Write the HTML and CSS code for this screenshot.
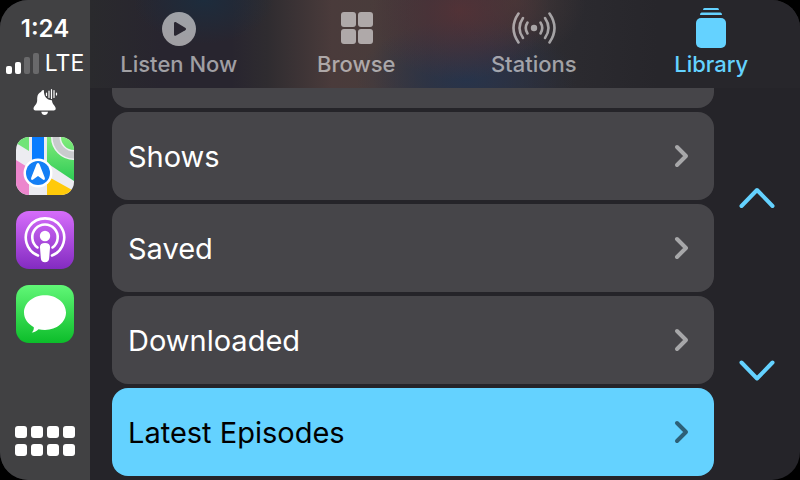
FILE: index.html
```html
<!DOCTYPE html>
<html lang="en">

<head>
    <meta charset="UTF-8">
    <meta name="viewport" content="width=device-width, initial-scale=1.0">
    <title>Podcasts</title>
    <link rel="stylesheet" href="styles.css">
</head>

<body>
    <div class="screen">
        <!-- dock -->
        <aside class="dock">
            <div class="status">
                <time class="clock">1:24</time>
                <div class="signal">
                    <svg width="34" height="22" viewBox="0 0 34 22" aria-hidden="true">
                        <g fill="#fff">
                            <rect x="0" y="14" width="6" height="8" rx="2" />
                            <rect x="9" y="10" width="6" height="12" rx="2" />
                        </g>
                        <g fill="#69696b">
                            <rect x="18" y="5" width="6" height="17" rx="2" />
                            <rect x="27" y="1" width="6" height="21" rx="2" />
                        </g>
                    </svg>
                    <span>LTE</span>
                </div>
                <svg class="bell" width="28" height="32" viewBox="0 0 28 32" aria-hidden="true">
                    <path fill="#fff" d="M12.500 5C13.400 5 12.600 6.600 13.300 9.300C14.300 13.300 17.600 15.500 21 15.200C21 19.500 24.700 20.600 24.700 23.500C24.700 25 23.800 25.400 22.800 25.400H4.500C3.300 25.400 2.500 24.900 2.500 23.600C2.500 20.800 6.200 20 6.200 15C6.200 10.500 7 8.300 10 7C10.600 5.700 11.200 5 12.500 5Z" />
                    <path fill="#fff" d="M10.300 26.800H17C16.600 29 15.400 30 13.600 30S10.700 29 10.300 26.800Z" />
                    <path stroke="#fff" stroke-width="1.200" stroke-linecap="round" d="M15.500 8V10.500M18 6V12.500M20.500 4.500V13.500M23 5.500V12.500M25.500 8V10" />
                </svg>
            </div>

            <nav class="apps">
                <a href="#" class="app" aria-label="Maps">
                    <svg viewBox="0 0 58 58">
                        <defs>
                            <linearGradient id="park" x1="0" y1="0" x2="0" y2="1">
                                <stop offset="0" stop-color="#82ec7c" />
                                <stop offset="1" stop-color="#2dcb54" />
                            </linearGradient>
                        </defs>
                        <rect width="58" height="58" fill="#ececf1" />
                        <path fill="#71e477" d="M0 0H13V14L0 6Z" />
                        <path fill="#ec86cd" d="M0 23L13 31V58H0Z" />
                        <path fill="url(#park)" d="M31 0H58V44L31 26Z" />
                        <path fill="#ffca0a" d="M31 39L58 54V58H31Z" />
                        <circle cx="58" cy="0" r="18" fill="none" stroke="#f0f0f3" stroke-width="10" />
                        <circle cx="58" cy="0" r="18" fill="none" stroke="#c9cbcd" stroke-width="7" />
                        <path fill="#087cff" d="M16 0H28V25H16Z" />
                        <circle cx="22" cy="36" r="14.500" fill="#fff" />
                        <circle cx="22" cy="36" r="12" fill="#147ff5" />
                        <path fill="#fff" d="M22 26C23 26 23.500 27 24 28.500L28.700 40.500C29.500 43 28 43.500 26.500 42.300L22 39L17.500 42.300C16 43.500 14.500 43 15.300 40.500L20 28.500C20.500 27 21 26 22 26Z" />
                    </svg>
                </a>
                <a href="#" class="app" aria-label="Podcasts">
                    <svg viewBox="0 0 58 58">
                        <defs>
                            <linearGradient id="purple" x1="0" y1="0" x2="0" y2="1">
                                <stop offset="0" stop-color="#d66dfb" />
                                <stop offset="1" stop-color="#832bc1" />
                            </linearGradient>
                        </defs>
                        <rect width="58" height="58" fill="url(#purple)" />
                        <g fill="none" stroke="#fff" stroke-width="2.600" stroke-linecap="round">
                            <path d="M22 44.500A19.200 19.200 0 1 1 36 44.500" />
                            <path d="M21.500 36.500A12.700 12.700 0 1 1 36.500 36.500" />
                        </g>
                        <circle cx="29" cy="25" r="5.200" fill="#fff" />
                        <path fill="#fff" d="M29 32C32.500 32 34.200 33.500 34 36.500L33.200 47C33 50 31.500 51.200 29 51.200S25 50 24.800 47L24 36.500C23.800 33.500 25.500 32 29 32Z" />
                    </svg>
                </a>
                <a href="#" class="app" aria-label="Messages">
                    <svg viewBox="0 0 58 58">
                        <defs>
                            <linearGradient id="green" x1="0" y1="0" x2="0" y2="1">
                                <stop offset="0" stop-color="#61f777" />
                                <stop offset="1" stop-color="#0cbd2a" />
                            </linearGradient>
                        </defs>
                        <rect width="58" height="58" fill="url(#green)" />
                        <path fill="#fff" d="M29 10.300C40.700 10.300 50 18 50 27.600S40.700 45 29 45C26.700 45 24.500 44.700 22.500 44.200C20.700 46 18.300 47.300 15.700 47.600C17.300 46.200 18 44.300 17.800 42.200C11.900 39.100 8 33.700 8 27.600C8 18 17.300 10.300 29 10.300Z" />
                    </svg>
                </a>
            </nav>

            <button type="button" class="dashboard" aria-label="Home">
                <i></i><i></i><i></i><i></i>
                <i></i><i></i><i></i><i></i>
            </button>
        </aside>

        <main class="main">
            <!-- tabs -->
            <nav class="tabs">
                <a href="#" class="tab">
                    <svg width="48" height="44" viewBox="0 0 48 44" aria-hidden="true">
                        <circle cx="24" cy="25" r="17" fill="currentColor" />
                        <path fill="#292631" d="M19 19.500C19 18.200 20 17.700 21.100 18.300L30.200 23.700C31.300 24.400 31.300 25.500 30.200 26.200L21.100 31.600C20 32.200 19 31.700 19 30.400Z" />
                    </svg>
                    <span>Listen Now</span>
                </a>
                <a href="#" class="tab">
                    <svg width="48" height="44" viewBox="0 0 48 44" fill="currentColor" aria-hidden="true">
                        <rect x="9" y="8" width="15" height="15" rx="3" />
                        <rect x="26" y="8" width="15" height="15" rx="3" />
                        <rect x="9" y="25" width="15" height="15" rx="3" />
                        <rect x="26" y="25" width="15" height="15" rx="3" />
                    </svg>
                    <span>Browse</span>
                </a>
                <a href="#" class="tab">
                    <svg width="48" height="44" viewBox="0 0 48 44" fill="none" stroke="currentColor" stroke-width="2.600" stroke-linecap="round" aria-hidden="true">
                        <circle cx="24" cy="24" r="3.200" fill="currentColor" stroke="none" />
                        <path d="M17.500 18.500Q14 24 17.500 29.500M30.500 18.500Q34 24 30.500 29.500" />
                        <path d="M13 14Q6 24 13 34M35 14Q42 24 35 34" />
                        <path d="M8.500 9.500Q-1.500 24 8.500 38.500M39.500 9.500Q49.500 24 39.500 38.500" />
                    </svg>
                    <span>Stations</span>
                </a>
                <a href="#" class="tab active">
                    <svg width="48" height="44" viewBox="0 0 48 44" fill="currentColor" aria-hidden="true">
                        <path d="M17.500 4H30.500Q32 4 32 6H16Q16 4 17.500 4Z" />
                        <path d="M14.500 8.500H33.500Q35 8.500 35 11H13Q13 8.500 14.500 8.500Z" />
                        <rect x="9" y="14" width="30" height="30" rx="5" />
                    </svg>
                    <span>Library</span>
                </a>
            </nav>

            <div class="content">
                <ul class="list">
                    <li class="row"></li>
                    <li>
                        <a href="#" class="row">
                            <span>Shows</span>
                            <svg class="more" viewBox="0 0 16 26"><path d="M3 4L12 13L3 22" /></svg>
                        </a>
                    </li>
                    <li>
                        <a href="#" class="row">
                            <span>Saved</span>
                            <svg class="more" viewBox="0 0 16 26"><path d="M3 4L12 13L3 22" /></svg>
                        </a>
                    </li>
                    <li>
                        <a href="#" class="row">
                            <span>Downloaded</span>
                            <svg class="more" viewBox="0 0 16 26"><path d="M3 4L12 13L3 22" /></svg>
                        </a>
                    </li>
                    <li>
                        <a href="#" class="row selected">
                            <span>Latest Episodes</span>
                            <svg class="more" viewBox="0 0 16 26"><path d="M3 4L12 13L3 22" /></svg>
                        </a>
                    </li>
                </ul>

                <div class="scroll">
                    <button type="button" aria-label="Scroll up">
                        <svg viewBox="0 0 40 24"><path d="M4.500 20L20 4L35.500 20" /></svg>
                    </button>
                    <button type="button" aria-label="Scroll down">
                        <svg viewBox="0 0 40 24"><path d="M4.500 4.500L20 20.500L35.500 4.500" /></svg>
                    </button>
                </div>
            </div>
        </main>
    </div>
</body>

</html>
```

FILE: styles.css
```css
* {
    margin: 0;
    padding: 0;
    box-sizing: border-box;
}

body {
    background-color: #000;
    color: #fff;
    font-family: Inter, "Liberation Sans", sans-serif;
}

li {
    list-style: none;
}

a {
    color: inherit;
    text-decoration: none;
}

button {
    border: 0;
    background: none;
    cursor: pointer;
}

svg {
    display: block;
}

.screen {
    display: flex;
    height: 100vh;
    border-radius: 28px;
    background-color: #252429;
    overflow: hidden;
}

/* dock */
.dock {
    display: flex;
    flex-direction: column;
    align-items: center;
    flex: none;
    width: 90px;
    padding: 17px 0 24px;
    background-color: #414143;
}

.status {
    display: flex;
    flex-direction: column;
    align-items: center;
    gap: 10px;
    font-size: 23px;
    line-height: 24px;
}

.clock {
    font-size: 24px;
    font-weight: 600;
}

.signal {
    display: flex;
    align-items: center;
    gap: 5px;
}

.apps {
    display: flex;
    flex-direction: column;
    gap: 16px;
    margin-top: 20px;
}

.app {
    width: 58px;
    height: 58px;
    border-radius: 13px;
    overflow: hidden;
}

.dashboard {
    display: grid;
    grid-template-columns: repeat(4, 12px);
    gap: 6px 4px;
    margin-top: auto;
}

.dashboard i {
    height: 12px;
    border-radius: 3px;
    background-color: #fff;
}

/* tabs */
.main {
    display: flex;
    flex-direction: column;
    flex: 1;
    min-width: 0;
}

.tabs {
    display: grid;
    grid-template-columns: repeat(4, 1fr);
    flex: none;
    height: 88px;
    padding-top: 4px;
    background:
        radial-gradient(ellipse 70px 44px at 16% 0, rgba(26, 46, 64, .8), transparent),
        radial-gradient(ellipse 90px 70px at 52% 12%, rgba(88, 50, 54, .8), transparent),
        radial-gradient(ellipse 110px 60px at 53% 90%, rgba(38, 52, 76, .9), transparent),
        radial-gradient(ellipse 70px 60px at 60% 0, rgba(74, 58, 56, .7), transparent),
        linear-gradient(90deg, #2a2a2d 0, #28252f 10%, #28252f 20%, #2f2c30 25%, #4a3b3b 34%, #493c3b 40%, #37333a 48%, #33303b 56%, #2c2b30 66%, #27262b 80%, #27262b 100%);
}

.tab {
    display: flex;
    flex-direction: column;
    align-items: center;
    gap: 4px;
    color: rgba(255, 255, 255, .56);
    font-size: 22px;
    font-weight: 500;
    line-height: 24px;
}

.active {
    color: #64d2ff;
}

/* list */
.content {
    display: flex;
    flex: 1;
    min-height: 0;
    padding-left: 22px;
}

.list {
    display: flex;
    flex-direction: column;
    justify-content: flex-end;
    gap: 4px;
    flex: 1;
    padding-bottom: 4px;
    overflow: hidden;
}

.row {
    display: flex;
    align-items: center;
    justify-content: space-between;
    flex: none;
    height: 88px;
    padding: 0 24px 0 16px;
    border-radius: 16px;
    background-color: #464549;
    font-size: 29px;
}

.more {
    width: 16px;
    height: 26px;
    fill: none;
    stroke: #a7a7a9;
    stroke-width: 4;
    stroke-linecap: round;
    stroke-linejoin: round;
}

.selected {
    background-color: #64d2ff;
    color: #000;
}

.selected .more {
    stroke: #2d6077;
}

.scroll {
    display: flex;
    flex-direction: column;
    align-items: center;
    justify-content: space-between;
    flex: none;
    width: 86px;
    padding: 98px 0;
}

.scroll svg {
    width: 40px;
    height: 24px;
    fill: none;
    stroke: #64d2ff;
    stroke-width: 4;
    stroke-linecap: round;
    stroke-linejoin: round;
}
```
